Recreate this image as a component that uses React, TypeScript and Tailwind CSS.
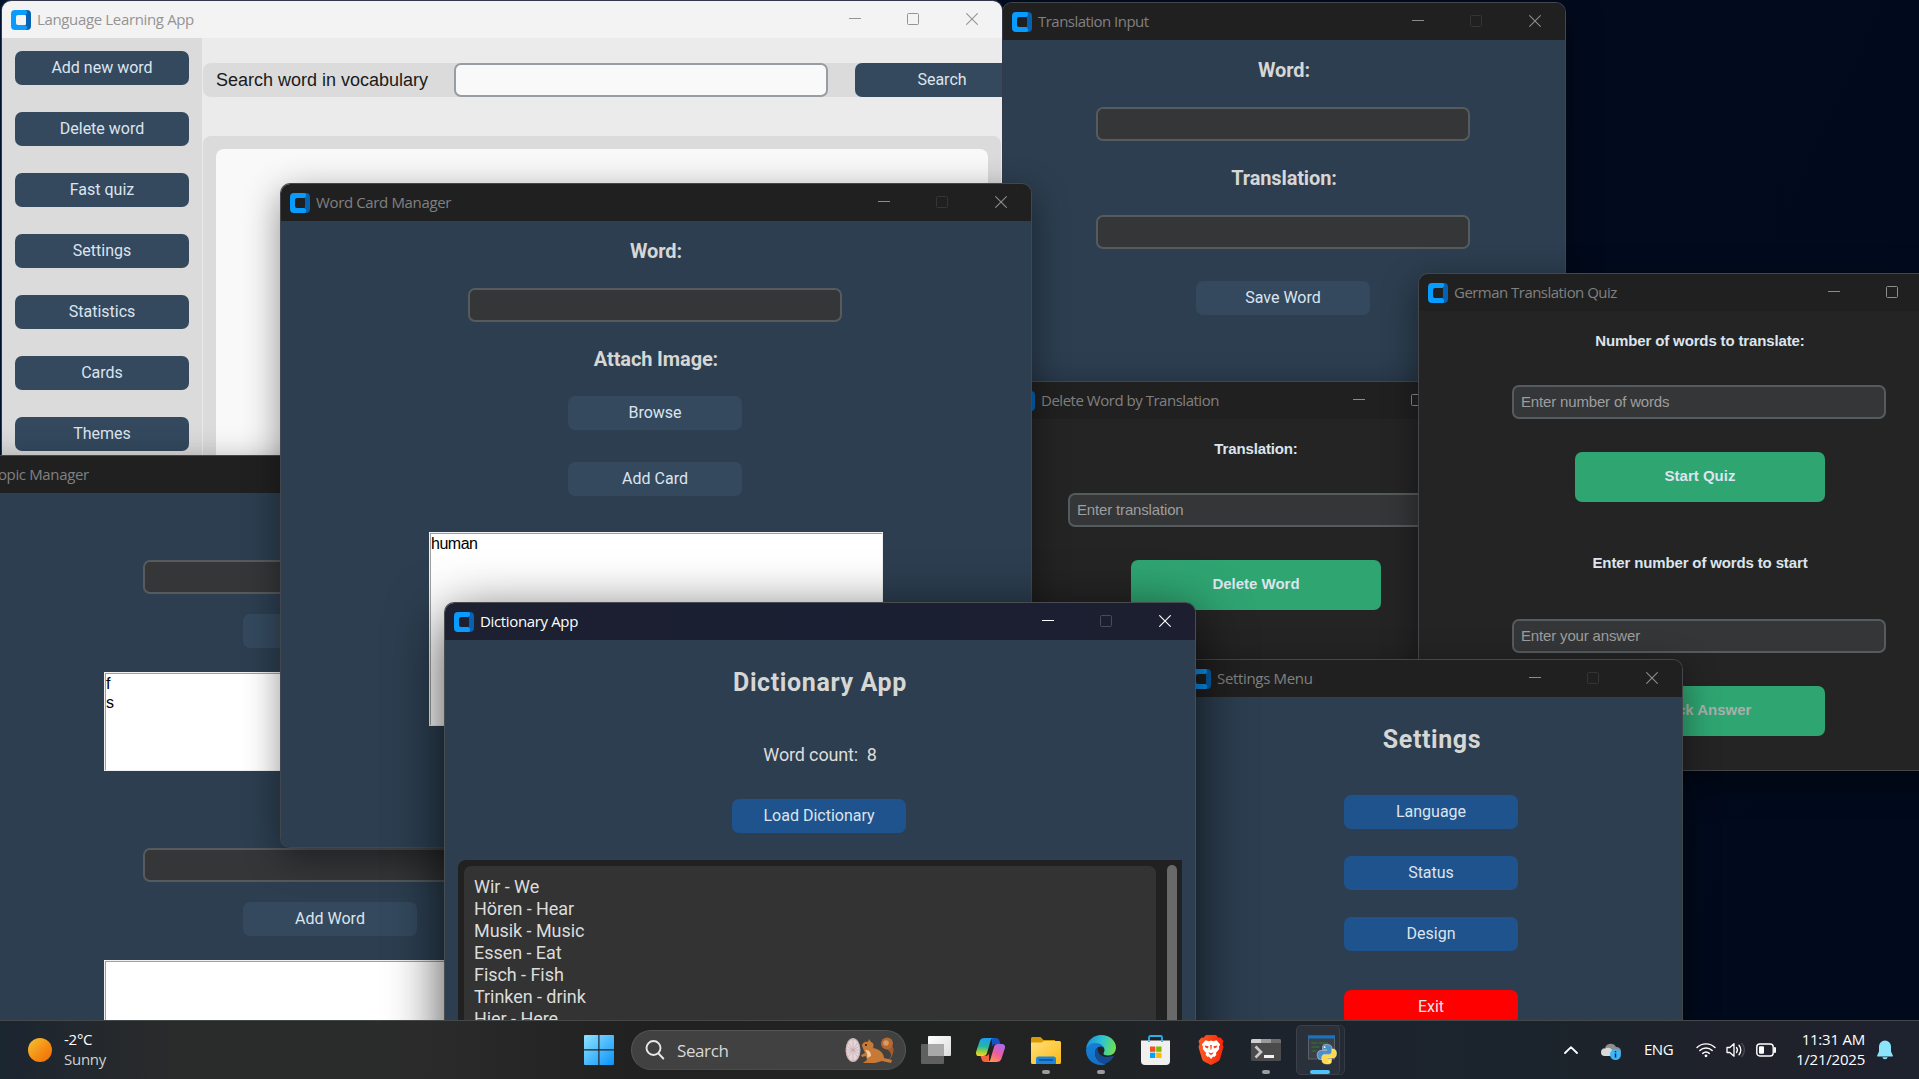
import React from "react";

function AppMark() {
  return (
    <svg width="20" height="20" viewBox="0 0 20 20" className="shrink-0">
      <path fill="#0562b0" fillRule="evenodd" d="M10 0h6a4 4 0 0 1 4 4v12a4 4 0 0 1-4 4h-6v-5h4a1 1 0 0 0 1-1V6a1 1 0 0 0-1-1h-4z" />
      <path fill="#0a9bff" d="M4 0h10.500a1.800 1.800 0 0 1 1.500 1.800v1.400L14.200 5H7a2 2 0 0 0-2 2v6a2 2 0 0 0 2 2h7.200l1.800 1.800v1.400a1.800 1.800 0 0 1-1.500 1.800H4a4 4 0 0 1-4-4V4a4 4 0 0 1 4-4z" />
    </svg>
  );
}

type WinProps = {
  title: string;
  frame: string;
  body: string;
  tracking: string;
  tone?: "dark" | "light" | "active";
  noMax?: boolean;
  children?: React.ReactNode;
};

const TONES = {
  dark: { bar: "bg-[#202020]", text: "text-[#808080]", glyph: "#8c8c8c", ring: "shadow-[0_0_0_1px_#43474b,0_10px_36px_rgba(0,0,0,0.45)]" },
  light: { bar: "bg-[#f3f3f3]", text: "text-[#949494]", glyph: "#949494", ring: "shadow-[0_0_0_1px_#34384a]" },
  active: { bar: "bg-[linear-gradient(90deg,#1c2030,#1b1f33_50%,#1d1f30)]", text: "text-white", glyph: "#ffffff", ring: "shadow-[0_0_0_1px_#4a4d50,0_14px_56px_rgba(0,0,0,0.75)]" },
};

function Win({ title, frame, body, tracking, tone = "dark", noMax, children }: WinProps) {
  const t = TONES[tone];
  const maxStroke = noMax ? (tone === "active" ? "#484b5b" : "#353535") : t.glyph;
  return (
    <section className={`absolute flex flex-col overflow-hidden rounded-[9px] ${t.ring} ${frame}`}>
      <header className={`flex h-[37px] shrink-0 items-center pl-[9px] ${t.bar}`}>
        <AppMark />
        <h1 className={`ml-1.5 whitespace-nowrap font-['Open_Sans',sans-serif] text-[15px] leading-[37px] ${tracking} ${t.text}`}>{title}</h1>
        <div className="ml-auto flex items-center gap-[46px] pb-px pr-6">
          <svg width="12" height="12" viewBox="0 0 12 12"><path d="M0 5.500h12" stroke={t.glyph} fill="none" /></svg>
          <svg width="12" height="12" viewBox="0 0 12 12"><rect x="0.500" y="0.500" width="11" height="11" rx="1" stroke={maxStroke} fill="none" /></svg>
          <svg className="ml-px" width="12" height="12" viewBox="0 0 12 12"><path d="M0.300 0.300l11.400 11.400M11.700 0.300L0.300 11.700" stroke={t.glyph} strokeWidth="1.100" fill="none" /></svg>
        </div>
      </header>
      <div className={`flex min-h-0 flex-1 flex-col ${body}`}>{children}</div>
    </section>
  );
}

function Btn({ children, className = "bg-[#34495e]" }: { children?: React.ReactNode; className?: string }) {
  return (
    <button className={`flex h-[34px] w-[174px] shrink-0 items-center justify-center rounded-[7px] font-['Roboto',sans-serif] text-[16px] leading-none text-[#dce4ee] ${className}`}>
      {children}
    </button>
  );
}

function Green({ children, className = "" }: { children: React.ReactNode; className?: string }) {
  return (
    <button className={`flex h-[50px] w-[250px] shrink-0 items-center justify-center rounded-[7px] bg-[#2fa572] pb-[3px] font-['Liberation_Sans',sans-serif] text-[15px] font-bold leading-none ${className}`}>
      {children}
    </button>
  );
}

function Entry({ text, className = "" }: { text?: string; className?: string }) {
  return (
    <div className={`flex h-[34px] w-[374px] shrink-0 items-center rounded-[7px] border-2 border-[#565b5e] bg-[#343638] pl-[7px] font-['Liberation_Sans',sans-serif] text-[15px] tracking-[-0.160px] text-[#9e9e9e] ${className}`}>
      {text}
    </div>
  );
}

function Caption({ children, className = "" }: { children: React.ReactNode; className?: string }) {
  return <div className={`h-7 shrink-0 font-['Roboto',sans-serif] text-[20px] font-bold leading-7 tracking-[-0.120px] text-[#d6d6d4] ${className}`}>{children}</div>;
}

function BoldLabel({ children, className = "" }: { children: React.ReactNode; className?: string }) {
  return <div className={`h-5 shrink-0 font-['Liberation_Sans',sans-serif] text-[15px] font-bold leading-5 tracking-[-0.140px] text-[#dce4ee] ${className}`}>{children}</div>;
}

function ListBox({ items = [], className = "" }: { items?: string[]; className?: string }) {
  return (
    <ul className={`w-[454px] shrink-0 border border-[#f0f0f0] bg-white pl-px pt-px font-['Liberation_Sans',sans-serif] text-[16px] leading-[19px] tracking-[-0.500px] text-black shadow-[inset_1px_1px_0_#a0a0a0] ${className}`}>
      {items.map((i) => <li key={i}>{i}</li>)}
    </ul>
  );
}

const NAV = ["Add new word", "Delete word", "Fast quiz", "Settings", "Statistics", "Cards", "Themes"];
const WORDS = ["Wir - We", "Hören - Hear", "Musik - Music", "Essen - Eat", "Fisch - Fish", "Trinken - drink", "Hier - Here"];

function MainWindow() {
  return (
    <Win title="Language Learning App" tone="light" tracking="tracking-[-0.350px]" frame="left-[2px] top-px h-[760px] w-[1000px]" body="bg-[#ebebeb]">
      <div className="flex flex-1">
        <nav className="flex w-[200px] shrink-0 flex-col gap-[27px] bg-[#dbdbdb] pl-[13px] pt-[13px]">
          {NAV.map((n) => <Btn key={n}>{n}</Btn>)}
        </nav>
        <div className="ml-px flex min-w-0 flex-1 flex-col overflow-hidden">
          <div className="mt-[25px] flex h-[34px] items-center rounded-l-[8px] bg-[#dbdbdb] pl-[13px]">
            <span className="w-[238px] shrink-0 pt-px font-['Liberation_Sans',sans-serif] text-[18px] text-[#1a1a1a]">Search word in vocabulary</span>
            <div className="h-[34px] w-[374px] shrink-0 rounded-[7px] border-2 border-[#979da2] bg-[#f9f9fa]" />
            <Btn className="ml-[27px] bg-[#34495e]">Search</Btn>
          </div>
          <div className="mr-px mt-[39px] flex flex-1 rounded-[8px] bg-[#dbdbdb] p-[13px]">
            <div className="flex-1 rounded-[8px] bg-[#f9f9fa]" />
          </div>
        </div>
      </div>
    </Win>
  );
}

function Desktop() {
  return (
    <main className="relative min-h-0 flex-1 overflow-hidden">
      <Win title="Translation Input" noMax tracking="tracking-[-0.530px]" frame="left-[1003px] top-[3px] h-[600px] w-[562px]" body="items-center bg-[#2c3e50]">
        <Caption className="mt-4">Word:</Caption>
        <Entry className="mr-0.5 mt-[23px]" />
        <Caption className="mt-[23px]">Translation:</Caption>
        <Entry className="mr-0.5 mt-[23px]" />
        <Btn className="mr-0.5 mt-8 bg-[#34495e]">Save Word</Btn>
      </Win>
      <MainWindow />
      <Win title="Topic Manager" tracking="tracking-[-0.350px]" frame="left-[-45px] top-[456px] h-[700px] w-[750px]" body="items-center bg-[#2c3e50]">
        <Entry className="mt-[67px]" />
        <Btn className="mt-5 bg-[#34495e]" />
        <ListBox className="ml-0.5 mt-6 h-[99px]" items={["f", "s"]} />
        <Entry className="mt-[77px]" />
        <Btn className="mt-5 bg-[#34495e]">Add Word</Btn>
        <ListBox className="ml-0.5 mt-6 h-[99px]" />
      </Win>
      <Win title="Delete Word by Translation" tracking="tracking-[-0.480px]" frame="left-[1006px] top-[382px] h-[400px] w-[500px]" body="items-center bg-[#242424]">
        <BoldLabel className="mt-5">Translation:</BoldLabel>
        <Entry className="mr-0.5 mt-[34px]" text="Enter translation" />
        <Green className="mt-[33px] text-[#dce4ee]">Delete Word</Green>
      </Win>
      <Win title="German Translation Quiz" tracking="tracking-[-0.530px]" frame="left-[1419px] top-[274px] h-[496px] w-[562px]" body="items-center bg-[#242424]">
        <BoldLabel className="mt-5">Number of words to translate:</BoldLabel>
        <Entry className="mr-0.5 mt-[34px]" text="Enter number of words" />
        <Green className="mt-[33px] text-[#dce4ee]">Start Quiz</Green>
        <BoldLabel className="mt-[51px]">Enter number of words to start</BoldLabel>
        <Entry className="mr-0.5 mt-[46px]" text="Enter your answer" />
        <Green className="mt-[33px] text-[#a9b0ac]">Check Answer</Green>
      </Win>
      <Win title="Settings Menu" noMax tracking="tracking-[-0.330px]" frame="left-[1182px] top-[660px] h-[500px] w-[500px]" body="items-center bg-[#2c3e50]">
        <h2 className="mt-7 h-[30px] shrink-0 font-['Roboto',sans-serif] text-[25px] font-bold leading-[30px] tracking-[0.600px] text-[#d6d6d4]">Settings</h2>
        <div className="mr-0.5 mt-10 flex flex-col gap-[27px]">
          <Btn className="bg-[#1f538d]">Language</Btn>
          <Btn className="bg-[#1f538d]">Status</Btn>
          <Btn className="bg-[#1f538d]">Design</Btn>
          <Btn className="mt-3 bg-[#ff0000]">Exit</Btn>
        </div>
      </Win>
      <Win title="Word Card Manager" noMax tracking="tracking-[-0.360px]" frame="left-[281px] top-[184px] h-[663px] w-[750px]" body="items-center bg-[#2c3e50]">
        <Caption className="mt-4">Word:</Caption>
        <Entry className="mr-0.5 mt-[23px]" />
        <Caption className="mt-[23px]">Attach Image:</Caption>
        <Btn className="mr-0.5 mt-[23px] bg-[#34495e]">Browse</Btn>
        <Btn className="mr-0.5 mt-8 bg-[#34495e]">Add Card</Btn>
        <ListBox className="mt-9 h-[194px]" items={["human"]} />
      </Win>
      <Win title="Dictionary App" tone="active" noMax tracking="tracking-[-0.350px]" frame="left-[445px] top-[603px] h-[600px] w-[750px]" body="items-center bg-[#2c3e50]">
        <h2 className="mt-7 h-[30px] shrink-0 font-['Roboto',sans-serif] text-[25px] font-bold leading-[30px] tracking-[0.630px] text-[#d6d6d4]">Dictionary App</h2>
        <p className="mt-[46px] h-[22px] shrink-0 whitespace-pre font-['Roboto',sans-serif] text-[18px] leading-[22px] tracking-[-0.150px] text-[#dcdcda]">{"Word count:  8"}</p>
        <Btn className="mr-0.5 mt-[33px] bg-[#1f538d]">Load Dictionary</Btn>
        <div className="mt-[27px] flex w-[724px] flex-1 rounded-[8px] rounded-tr-none bg-[#212121] pl-1.5 pt-1.5">
          <ul className="w-[692px] rounded-[7px] bg-[#333333] pl-2.5 pt-2.5 font-['Roboto',sans-serif] text-[18px] leading-[22px] tracking-[-0.050px] text-[#dcdcdc]">
            {WORDS.map((w) => <li key={w}>{w}</li>)}
          </ul>
          <div className="-mt-px ml-[11px] w-[10px] rounded-[5px] bg-[#696969]" />
        </div>
      </Win>
    </main>
  );
}

function StartIcon() {
  return (
    <svg width="30" height="30" viewBox="0 0 30 30" className="-ml-px">
      <defs><linearGradient id="win" x1="0" y1="0" x2="1" y2="1"><stop offset="0" stopColor="#8fe3ff" /><stop offset="1" stopColor="#0a93fa" /></linearGradient></defs>
      <path fill="url(#win)" d="M1 0h13.300v14.300H0V1a1 1 0 0 1 1-1zM15.500 0H29a1 1 0 0 1 1 1v13.300H15.500zM0 15.500h14.300V30H1a1 1 0 0 1-1-1zM15.500 15.500H30V29a1 1 0 0 1-1 1H15.500z" />
    </svg>
  );
}

function Squirrel() {
  return (
    <svg width="50" height="27" viewBox="0 0 50 27">
      <ellipse cx="8" cy="13" rx="7.500" ry="12" fill="#cdb4b6" />
      <ellipse cx="8" cy="13" rx="6.300" ry="10.500" fill="#e6d6d8" />
      <path d="M8 2.500v21M3.500 6l9 14M12.500 6l-9 14M1.800 13h12.400M2.200 9.500l11.600 7M13.800 9.500l-11.600 7" stroke="#bda2a8" strokeWidth="0.600" />
      <path d="M38 24c8-1 10-6 6-10-3-3-7-4-5-8 1-3 6-3 7 0 1 4 4 5 2 10-1 5-4 8-10 8z" fill="#a65a27" />
      <circle cx="42" cy="6.500" r="6" fill="#b5682f" />
      <circle cx="41" cy="6" r="2.800" fill="#d79a68" />
      <path d="M17 9c0-3 3-5 6-4l1-3 2 3c3 1 3 4 2 6 6 1 11 5 11 10l8 2-1 3-9-2-7 2H18l4-3-1-4-4 1-1-2 4-2z" fill="#c67a35" />
      <path d="M20 13c2 2 3 5 2 8l4-2c0-4-2-6-6-6z" fill="#f0cda4" />
      <circle cx="21" cy="8" r="1" fill="#2a1a10" />
    </svg>
  );
}

function TaskViewIcon() {
  return (
    <svg width="30" height="28" viewBox="0 0 30 28">
      <defs><linearGradient id="tv" x1="0" y1="0" x2="1" y2="1"><stop offset="0" stopColor="#fff" /><stop offset="1" stopColor="#dcdcdc" /></linearGradient></defs>
      <rect x="7" y="0" width="23" height="20" rx="1" fill="url(#tv)" />
      <rect x="0" y="8" width="23" height="20" rx="1" fill="#6b6b6b" fillOpacity="0.850" />
      <rect x="7" y="8" width="16" height="12" fill="#a9a9a9" />
    </svg>
  );
}

function CopilotIcon() {
  return (
    <svg width="29" height="26" viewBox="0 0 29 26">
      <defs>
        <linearGradient id="cpa" x1="0.300" y1="0" x2="0.200" y2="1"><stop offset="0" stopColor="#1f9df0" /><stop offset="0.450" stopColor="#24b6a8" /><stop offset="0.750" stopColor="#9ccf3c" /><stop offset="1" stopColor="#ffd02a" /></linearGradient>
        <linearGradient id="cpb" x1="0.800" y1="0" x2="0.200" y2="1"><stop offset="0" stopColor="#a66cf0" /><stop offset="0.500" stopColor="#ef5c9f" /><stop offset="1" stopColor="#ff9a48" /></linearGradient>
      </defs>
      <path d="M16 1h4c2 0 3 1 3.500 3l1 3h-5c-2 0-3 1-3.600 3z" fill="#1653c4" />
      <path d="M13 25H9c-2 0-3-1-3.500-3l-1-3h5c2 0 3-1 3.600-3z" fill="#f1643c" />
      <path d="M8.500 1H18c-2 0-3 1-3.500 3L11 16c-.6 2-1.500 3-3.500 3H3c-2.500 0-3.500-2-2.800-4.500L3.500 4.500C4.200 2 6 1 8.500 1z" fill="url(#cpa)" />
      <path d="M20.500 25H11c2 0 3-1 3.500-3L18 10c.6-2 1.500-3 3.500-3H26c2.500 0 3.500 2 2.800 4.500l-3.300 10C24.800 24 23 25 20.500 25z" fill="url(#cpb)" />
    </svg>
  );
}

function FolderIcon() {
  return (
    <svg width="30" height="27" viewBox="0 0 30 27">
      <defs><linearGradient id="fo" x1="0" y1="0" x2="1" y2="1"><stop offset="0" stopColor="#ffe07a" /><stop offset="1" stopColor="#fbb917" /></linearGradient></defs>
      <path d="M1.500 0h8l3 3H24v6H0V1.500A1.500 1.500 0 0 1 1.500 0z" fill="#d99a06" />
      <path d="M0 5.500h10.500L13 4h15.500A1.500 1.500 0 0 1 30 5.500v20a1.500 1.500 0 0 1-1.500 1.500h-27A1.500 1.500 0 0 1 0 25.500z" fill="url(#fo)" />
      <path d="M7.500 19.500h15a2.500 2.500 0 0 1 2.500 2.500v5H5v-5a2.500 2.500 0 0 1 2.500-2.500z" fill="#1c86dc" />
      <path d="M8.500 23h13" stroke="#0b4f95" strokeWidth="1.400" strokeLinecap="round" />
    </svg>
  );
}

function EdgeIcon() {
  return (
    <svg width="30" height="30" viewBox="0 0 30 30">
      <defs>
        <linearGradient id="ea" x1="0" y1="0.300" x2="1" y2="0.500"><stop offset="0" stopColor="#1e8ed8" /><stop offset="0.500" stopColor="#2cc3d5" /><stop offset="1" stopColor="#6fe04f" /></linearGradient>
        <linearGradient id="eb" x1="0" y1="0" x2="0.600" y2="1"><stop offset="0" stopColor="#1382d8" /><stop offset="1" stopColor="#1370c4" /></linearGradient>
      </defs>
      <path d="M0 14C1 5 8 0 15 0c9 0 15 6 15 12.500 0 5-3.500 8-8 8-3 0-4.500-1-4.500-2 0-.8 1-1.500 1-3.500 0-3-3-6-7.500-6C6 9 2 11 0 14z" fill="url(#ea)" />
      <path d="M0 15c1-4.500 5-7 9.500-7 5 0 9 3.500 9 7 0-2-1.500-3.600-4-3.600-3 0-5.500 3-5.500 6.600 0 5.500 4.500 10.500 11 11-1.500.8-3.200 1-5 1C6.500 30 0 23.500 0 15z" fill="url(#eb)" />
      <path d="M9 18c0-2.800 1.300-4.700 2.800-5.700-.8 4.200 1.800 9.700 9.200 9.700 2.700 0 4.500-.6 6-1.200.5-.2.900.3.600.8C25.500 25.500 22.500 28 19 29 13 28.500 9 23.500 9 18z" fill="#144c94" />
    </svg>
  );
}

function StoreIcon() {
  return (
    <svg width="29" height="30" viewBox="0 0 29 30">
      <path d="M8 7V2.500A1.500 1.500 0 0 1 9.500 1h10A1.500 1.500 0 0 1 21 2.500V7" fill="none" stroke="#25b1f0" strokeWidth="1.800" />
      <path d="M0 5.500h29V26a4 4 0 0 1-4 4H4a4 4 0 0 1-4-4z" fill="#f0f0f0" />
      <path d="M8 5.500V7M21 5.500V7" stroke="#25b1f0" strokeWidth="1.800" />
      <path d="M9 11.500h5.300v5.300H9z" fill="#f25022" /><path d="M15.200 11.500h5.300v5.300h-5.300z" fill="#7fba00" />
      <path d="M9 17.700h5.300V23H9z" fill="#00a4ef" /><path d="M15.200 17.700h5.300V23h-5.300z" fill="#ffb900" />
    </svg>
  );
}

function BraveIcon() {
  return (
    <svg width="26" height="30" viewBox="0 0 26 30">
      <defs><linearGradient id="br" x1="0" x2="1"><stop offset="0" stopColor="#ff5a20" /><stop offset="1" stopColor="#f8250a" /></linearGradient></defs>
      <path d="M8 0h10l2.500 2.700 2-.3L25.500 6l-1 3 1 3-3.500 12c-.5 1.500-1.500 2-2.500 2.800L13 30l-6.500-3.200C5.500 26 4.500 25.500 4 24L.5 12l1-3-1-3 3-3.600 2 .3z" fill="url(#br)" />
      <path d="M13 5.500l2 .7 3.500-.9 3.700 4.200-1.300 2.300.3 2.200-3.300 4 .5 1.700-2 2.400-1.200-.7L13 24l-2.200-2.600-1.200.7-2-2.400.5-1.700-3.300-4 .3-2.200-1.300-2.300 3.700-4.200 3.500.9z" fill="#fff" />
      <path d="M6.500 10.500l4 .8-.5 2.200-2.500-1zM19.500 10.500l-4 .8.500 2.200 2.500-1zM12.200 10h1.600l-.3 4.500h-1zM10.500 17.200l2.500 1.100 2.500-1.100-.8 1.900-1.700 1-1.700-1z" fill="#fb3c14" />
    </svg>
  );
}

function TerminalIcon() {
  return (
    <svg width="30" height="22" viewBox="0 0 30 22">
      <rect width="30" height="22" rx="1.500" fill="#4b4b4b" />
      <path d="M1.500 0H10v4H0V1.500A1.500 1.500 0 0 1 1.500 0z" fill="#cfcfcf" /><path d="M10 0h10v4H10z" fill="#9a9a9a" /><path d="M20 0h8.500A1.500 1.500 0 0 1 30 1.500V4H20z" fill="#6e6e6e" />
      <path d="M4.500 7.500L10 13l-5.500 5.500" fill="none" stroke="#c9c9c9" strokeWidth="2.600" />
      <path d="M13 16h10v3H13z" fill="#f2f2f2" />
    </svg>
  );
}

function PythonIcon() {
  return (
    <svg width="30" height="30" viewBox="0 0 30 30">
      <rect x="0.500" y="1" width="26" height="23" fill="#3b4046" stroke="#59616a" />
      <path d="M0 0.500h27V3.500H0z" fill="#1773c2" />
      <path d="M3.500 8h6M11 8h9M3.500 12h8M3.500 16h5" stroke="#2f7a3a" strokeWidth="1.200" />
      <path d="M18.500 9.500c-4 0-4 1.500-4 3.500v1.700h4.300v.8h-6c-2.500 0-3.600 2-3.600 4.500s1 4.500 3.300 4.500H14v-2.200c0-2 1.500-3 3.300-3h4.200c1.500 0 2.500-1 2.500-2.500V13c0-2-1.500-3.500-5.500-3.500z" fill="#4a8fc8" stroke="#d8e6f0" strokeWidth="0.500" />
      <path d="M19.500 29c4 0 4-1.500 4-3.500v-1.700h-4.300V23h6c2.300 0 3.300-2 3.300-4.500s-1-4.500-3.300-4.500H24v2.700c0 2-1.500 3-3.300 3h-4.200c-1.500 0-2.500 1-2.500 2.500v3.300c0 2 1.500 3.500 5.500 3.500z" fill="#ffd94a" stroke="#fff3c0" strokeWidth="0.500" />
      <circle cx="16.600" cy="12.200" r="0.900" fill="#fff" /><circle cx="21.400" cy="26.300" r="0.900" fill="#fff" />
    </svg>
  );
}

function Slot({ children, className, dot }: { children: React.ReactNode; className: string; dot?: boolean }) {
  return (
    <div className={`relative flex h-full shrink-0 items-center justify-center ${className}`}>
      {children}
      {dot && <span className="absolute bottom-[5px] h-1 w-2 rounded-full bg-[#9b9b9b]" />}
    </div>
  );
}

function Taskbar() {
  return (
    <footer className="relative flex h-[59px] shrink-0 items-center border-t border-[#454849] bg-[linear-gradient(90deg,#1b2530_0%,#2a2b2b_9%,#2b2b2b_22%,#212121_33%,#222323_55%,#1d232c_66%,#1b242c_80%,#20212b_92%,#1d222e_100%)] font-['Open_Sans',sans-serif] text-white">
      <div className="flex w-[585px] shrink-0 items-center pl-7">
        <div className="size-6 rounded-full bg-[linear-gradient(135deg,#f4c435,#f5890f_60%,#ef6a0c)]" />
        <div className="ml-3 pb-0.5 text-[15px] leading-5 tracking-[-0.250px]">
          <div>-2°C</div>
          <div className="text-[#cfd2d4]">Sunny</div>
        </div>
      </div>
      <StartIcon />
      <div className="ml-[17px] flex h-10 w-[275px] shrink-0 items-center rounded-full border border-[#555] border-b-[#4a4a4a] bg-[#414141] pl-[13px]">
        <svg width="20" height="20" viewBox="0 0 20 20" fill="none" stroke="#e8e8e8" strokeWidth="1.900" strokeLinecap="round"><circle cx="8.500" cy="8" r="7" /><path d="M13.500 13.500l4.800 5" /></svg>
        <span className="ml-3 w-[168px] pt-px text-[17px] leading-6 tracking-[-0.400px] text-[#d8d8d8]">Search</span>
        <Squirrel />
      </div>
      <Slot className="ml-[2px] w-[55px]"><TaskViewIcon /></Slot>
      <Slot className="w-[55px]"><CopilotIcon /></Slot>
      <Slot className="w-[55px]" dot><FolderIcon /></Slot>
      <Slot className="w-[55px]" dot><EdgeIcon /></Slot>
      <Slot className="w-[55px]"><StoreIcon /></Slot>
      <Slot className="w-[55px]"><BraveIcon /></Slot>
      <Slot className="w-[55px]" dot><TerminalIcon /></Slot>
      <Slot className="w-[55px]">
        <span className="absolute left-[8px] top-[4px] h-[50px] w-[44px] rounded-[5px] border border-[#343b45] bg-[#232a33]" />
        <span className="absolute left-[3px] top-[4px] h-[50px] w-[44px] rounded-[5px] border border-[#3a414b] bg-[#2a313b]" />
        <span className="relative ml-1"><PythonIcon /></span>
        <span className="absolute bottom-[5px] left-[17px] h-1 w-5 rounded-full bg-[#4cc2ff]" />
      </Slot>
      <div className="ml-auto flex h-full items-center pr-[26px] text-[15px]">
        <svg width="14" height="8" viewBox="0 0 14 8" fill="none" stroke="#fff" strokeWidth="1.800" strokeLinecap="round" strokeLinejoin="round"><path d="M1 7l6-5.800L13 7" /></svg>
        <svg className="ml-[23px] mt-1" width="20" height="18" viewBox="0 0 20 18">
          <path d="M4 13a4 4 0 0 1 0-8 6 6 0 0 1 11-1 4.500 4.500 0 0 1 1 9z" fill="#8e8e8e" />
          <path d="M3.500 13a3.500 3.500 0 0 1 .3-7A5 5 0 0 1 12 9v4z" fill="#d9d9d9" />
          <circle cx="14.500" cy="11.500" r="5.500" fill="#3fb6f5" /><path d="M14.500 10.500v4M14.500 8v1.300" stroke="#0c2a40" strokeWidth="1.500" />
        </svg>
        <span className="ml-[23px] w-[30px] pb-px tracking-[-0.500px]">ENG</span>
        <svg className="ml-[22px]" width="20" height="16" viewBox="0 0 20 16" fill="none" stroke="#fff" strokeWidth="1.400" strokeLinecap="round"><path d="M1 5.500a13 13 0 0 1 18 0M3.800 8.500a9 9 0 0 1 12.400 0M6.700 11.400a5 5 0 0 1 6.600 0" /><circle cx="10" cy="13.800" r="1.400" fill="#fff" stroke="none" /></svg>
        <svg className="ml-[10px]" width="20" height="16" viewBox="0 0 20 16" fill="none" stroke="#fff" strokeWidth="1.300" strokeLinecap="round" strokeLinejoin="round"><path d="M1 5.500h2.800L8 1.800v12.400L3.800 10.500H1z" /><path d="M10.500 5.500a4 4 0 0 1 0 5M13 3.300a7 7 0 0 1 0 9.400" /><path d="M15.800 1.500a9.500 9.500 0 0 1 0 13" stroke="#4b4f55" /></svg>
        <svg className="ml-[10px]" width="20" height="14" viewBox="0 0 20 14"><rect x="0.800" y="1" width="16.400" height="12" rx="3" fill="none" stroke="#fff" strokeWidth="1.400" /><rect x="3" y="3.200" width="5" height="7.600" rx="1" fill="#fff" /><path d="M18.300 4.500a2.500 2.500 0 0 1 0 5z" fill="#fff" stroke="#fff" /></svg>
        <div className="ml-[18px] mr-px w-[71px] whitespace-nowrap pb-0.5 text-right leading-5 tracking-[-0.220px]">
          <div>11:31 AM</div>
          <div>1/21/2025</div>
        </div>
        <svg className="ml-[11px]" width="16" height="20" viewBox="0 0 16 20" fill="#8ce4fb"><path d="M8 0.500a6 6 0 0 1 6 6v5l1.800 4c.2.500-.1 1-.6 1H.8c-.5 0-.8-.5-.6-1l1.800-4v-5a6 6 0 0 1 6-6zM5.300 17.300h5.400a2.800 2.500 0 0 1-5.400 0z" /></svg>
      </div>
    </footer>
  );
}

export default function App() {
  return (
    <div className="flex h-[1079px] w-[1919px] flex-col overflow-hidden bg-[linear-gradient(115deg,#03122e_0%,#020b1e_60%,#010a1c_100%)]">
      <Desktop />
      <Taskbar />
    </div>
  );
}
